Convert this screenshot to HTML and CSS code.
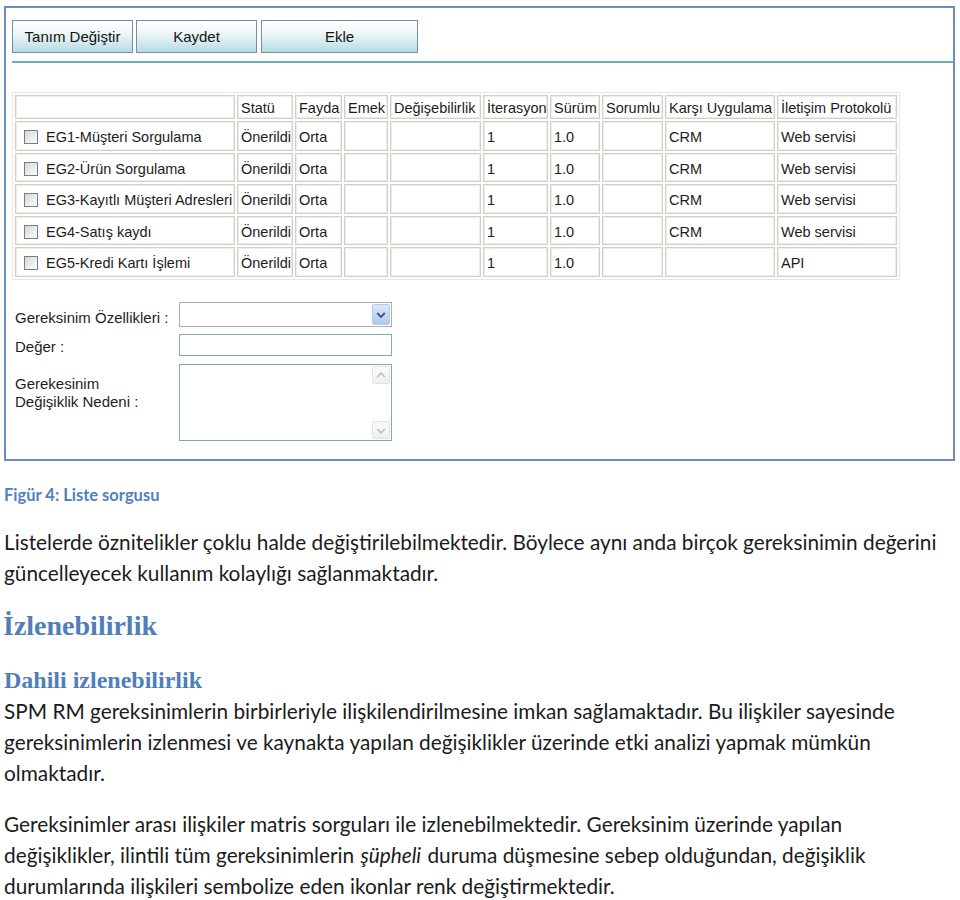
FILE: index.html
```html
<!DOCTYPE html>
<html lang="tr">
<head>
<meta charset="utf-8">
<title>Liste sorgusu</title>
<link rel="stylesheet" href="styles.css">
</head>
<body>
<div class="frame">
  <div class="toolbar">
    <button class="btn btn-tanim">Tanım Değiştir</button>
    <button class="btn btn-kaydet">Kaydet</button>
    <button class="btn btn-ekle">Ekle</button>
  </div>
  <div class="rule"></div>
  <table class="grid">
    <tr class="head">
      <td class="c1"></td>
      <td class="c2">Statü</td>
      <td class="c3">Fayda</td>
      <td class="c4">Emek</td>
      <td class="c5">Değişebilirlik</td>
      <td class="c6">İterasyon</td>
      <td class="c7">Sürüm</td>
      <td class="c8">Sorumlu</td>
      <td class="c9">Karşı Uygulama</td>
      <td class="c10">İletişim Protokolü</td>
    </tr>
    <tr>
      <td><span class="check"></span>EG1-Müşteri Sorgulama</td>
      <td>Önerildi</td><td>Orta</td><td></td><td></td><td>1</td><td>1.0</td><td></td><td>CRM</td><td>Web servisi</td>
    </tr>
    <tr>
      <td><span class="check"></span>EG2-Ürün Sorgulama</td>
      <td>Önerildi</td><td>Orta</td><td></td><td></td><td>1</td><td>1.0</td><td></td><td>CRM</td><td>Web servisi</td>
    </tr>
    <tr>
      <td><span class="check"></span>EG3-Kayıtlı Müşteri Adresleri</td>
      <td>Önerildi</td><td>Orta</td><td></td><td></td><td>1</td><td>1.0</td><td></td><td>CRM</td><td>Web servisi</td>
    </tr>
    <tr>
      <td><span class="check"></span>EG4-Satış kaydı</td>
      <td>Önerildi</td><td>Orta</td><td></td><td></td><td>1</td><td>1.0</td><td></td><td>CRM</td><td>Web servisi</td>
    </tr>
    <tr>
      <td><span class="check"></span>EG5-Kredi Kartı İşlemi</td>
      <td>Önerildi</td><td>Orta</td><td></td><td></td><td>1</td><td>1.0</td><td></td><td></td><td>API</td>
    </tr>
  </table>
  <div class="form">
    <div class="label label-select">Gereksinim Özellikleri :</div>
    <div class="select">
      <span class="drop">
        <svg width="18" height="21" viewBox="0 0 18 21"><polyline points="5.5,8.5 9,12 12.5,8.5" fill="none" stroke="#3f5784" stroke-width="2.2" stroke-linecap="square"/></svg>
      </span>
    </div>
    <div class="label label-input">Değer :</div>
    <div class="input"></div>
    <div class="label label-area">Gerekesinim<br>Değişiklik Nedeni :</div>
    <div class="area">
      <div class="scroll">
        <span class="sbtn"><svg width="17" height="17" viewBox="0 0 17 17"><polyline points="4.5,10 8.5,6 12.5,10" fill="none" stroke="#b9bdc2" stroke-width="1.6"/></svg></span>
        <span class="sbtn"><svg width="17" height="17" viewBox="0 0 17 17"><polyline points="4.5,7 8.5,11 12.5,7" fill="none" stroke="#b9bdc2" stroke-width="1.6"/></svg></span>
      </div>
    </div>
  </div>
</div>

<p class="caption">Figür 4: Liste sorgusu</p>
<p class="para para-first">Listelerde öznitelikler çoklu halde değiştirilebilmektedir. Böylece aynı anda birçok gereksinimin değerini güncelleyecek kullanım kolaylığı sağlanmaktadır.</p>
<h1 class="h1">İzlenebilirlik</h1>
<h2 class="h2">Dahili izlenebilirlik</h2>
<p class="para para-tight">SPM RM gereksinimlerin birbirleriyle ilişkilendirilmesine imkan sağlamaktadır. Bu ilişkiler sayesinde gereksinimlerin izlenmesi ve kaynakta yapılan değişiklikler üzerinde etki analizi yapmak mümkün olmaktadır.</p>
<p class="para para-last">Gereksinimler arası ilişkiler matris sorguları ile izlenebilmektedir. Gereksinim üzerinde yapılan değişiklikler, ilintili tüm gereksinimlerin <em class="suspect">şüpheli</em> duruma düşmesine sebep olduğundan, değişiklik durumlarında ilişkileri sembolize eden ikonlar renk değiştirmektedir.</p>
</body>
</html>
```

FILE: styles.css
```css
* { box-sizing: border-box; }

body {
  margin: 0;
  background: #ffffff;
  font-family: "Lato", "Liberation Sans", sans-serif;
  color: #1a1a1a;
}

/* ---------- application frame ---------- */
.frame {
  margin: 6px 0 0 4px;
  width: 951px;
  height: 455px;
  border: 2px solid #6b8dbd;
  font-family: "Liberation Sans", Arial, sans-serif;
  font-size: 14.5px;
  color: #1c1c1c;
}

.toolbar {
  display: flex;
  gap: 3px;
  padding: 12px 0 0 6px;
}

.btn {
  height: 33px;
  padding: 0;
  border: 1px solid #6f939a;
  background: linear-gradient(#ffffff 0%, #f1f8f9 35%, #d3eaee 70%, #b6dae2 100%);
  font: inherit;
  font-size: 15px;
  color: #141414;
}
.btn-tanim { width: 121px; }
.btn-kaydet { width: 121px; }
.btn-ekle { width: 157px; margin-left: 1px; }

.rule {
  height: 2px;
  margin: 8px 0 0 6px;
  background: #69b2b5;
}

/* ---------- grid ---------- */
.grid {
  margin: 29px 0 0 6px;
  width: 888px;
  table-layout: fixed;
  border: 1px solid #e6e5de;
  border-spacing: 2px;
}

.grid td {
  height: 29.5px;
  padding: 3px 2px 0 3px;
  border: 1px solid #d2d0c6;
  box-shadow: inset 0 0 0 1px #eeede8;
  white-space: nowrap;
  overflow: hidden;
  vertical-align: middle;
}
.grid .head td {
  height: 24px;
  padding-top: 1px;
}

.c1 { width: 220px; }
.c2 { width: 56px; }
.c3 { width: 47px; }
.c4 { width: 44px; }
.c5 { width: 91px; }
.c6 { width: 65px; }
.c7 { width: 50px; }
.c8 { width: 61px; }
.c9 { width: 110px; }
.c10 { width: 120px; }

.check {
  display: inline-block;
  width: 14px;
  height: 14px;
  margin: 0 8px 0 5px;
  vertical-align: -2px;
  border: 1px solid #6f7f90;
  background: linear-gradient(135deg, #d6d6cf 0%, #ebebe6 50%, #fbfbf9 100%);
}

/* ---------- form ---------- */
.form {
  display: grid;
  grid-template-columns: 164px 213px;
  row-gap: 7px;
  margin: 22px 0 0 9px;
}

.label {
  line-height: 18px;
  font-size: 15px;
  color: #1e1e1e;
}
.label-select { padding-top: 7px; }
.label-input { padding-top: 4px; }
.label-area { padding-top: 12px; }

.select {
  height: 25px;
  border: 1px solid #a7aeb6;
  background: #fff;
  display: flex;
  justify-content: flex-end;
  padding: 1px 1px 1px 0;
}
.drop {
  width: 18px;
  height: 21px;
  border: 1px solid #b8cae8;
  border-radius: 2px;
  background: linear-gradient(#dde8fa, #c3d5f3 55%, #b2c8ef);
  display: flex;
}

.input {
  height: 22px;
  border: 1px solid #7fadae;
  background: #fff;
}

.area {
  height: 77px;
  margin-top: 1px;
  border: 1px solid #7fadae;
  background: #fff;
  display: flex;
  justify-content: flex-end;
  padding: 1px 1px 1px 0;
}
.scroll {
  width: 18px;
  display: flex;
  flex-direction: column;
  justify-content: space-between;
}
.sbtn {
  width: 18px;
  height: 18px;
  border: 1px solid #e2e4e6;
  border-radius: 2px;
  background: linear-gradient(#fafafa, #eeeff0);
  display: flex;
}

/* ---------- document text ---------- */
.caption {
  margin: 24px 0 0 4px;
  font-size: 16.5px;
  line-height: 20px;
  font-weight: 700;
  color: #4f81bd;
}

.para {
  margin: 0 0 0 4px;
  width: 950px;
  font-size: 20.8px;
  line-height: 31px;
  color: #1b1b1b;
}
.para-first { margin-top: 21px; }
.para-tight { margin-top: 0; }
.para-last { margin-top: 20px; }

.suspect {
  padding: 0 1px;
}

.h1 {
  margin: 20px 0 0 3px;
  font-family: "Liberation Serif", "Times New Roman", serif;
  font-size: 28px;
  line-height: 36px;
  font-weight: 700;
  color: #4f7fb8;
}
.h2 {
  margin: 21px 0 0 4px;
  font-family: "Liberation Serif", "Times New Roman", serif;
  font-size: 24px;
  line-height: 30px;
  font-weight: 700;
  color: #4f7fb8;
}
```
